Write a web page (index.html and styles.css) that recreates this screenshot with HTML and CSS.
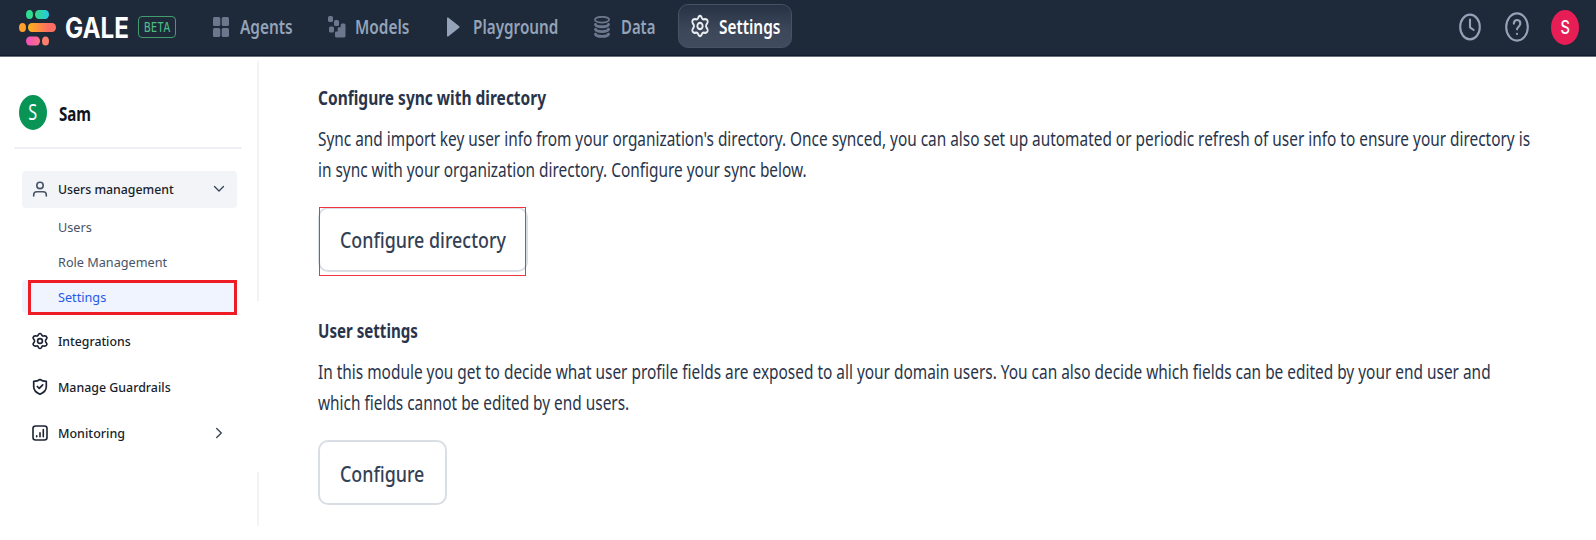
FILE: index.html
```html
<!DOCTYPE html>
<html lang="en">
<head>
<meta charset="utf-8">
<title>GALE Settings</title>
<link rel="stylesheet" href="styles.css">
</head>
<body>
<svg class="defs" width="0" height="0" aria-hidden="true">
  <symbol id="gear" viewBox="0 0 24 24" preserveAspectRatio="none">
    <path d="M9.6 4.3L10.2 3Q12 .9 13.8 3L14.4 4.3Q15 5.5 16.4 5.4L18 5.2Q20.6 5.1 21.2 7.2Q21.4 8.4 20.4 9.7L19.6 10.7Q18.8 12 19.6 13.3L20.4 14.3Q21.4 15.6 21.2 16.8Q20.6 18.9 18 18.8L16.4 18.6Q15 18.5 14.4 19.7L13.8 21Q12 23.1 10.2 21L9.6 19.7Q9 18.5 7.6 18.6L6 18.8Q3.4 18.9 2.8 16.8Q2.6 15.6 3.6 14.3L4.4 13.3Q5.2 12 4.4 10.7L3.6 9.7Q2.6 8.4 2.8 7.2Q3.4 5.1 6 5.2L7.6 5.4Q9 5.5 9.6 4.3Z"/>
    <circle cx="12" cy="12" r="3.2"/>
  </symbol>
</svg>
<header class="topbar">
  <div class="brand">
    <svg class="logo" width="38" height="36" viewBox="0 0 38 36">
      <defs>
        <linearGradient id="g1"><stop offset="0" stop-color="#34d982"/><stop offset="1" stop-color="#25c9e8"/></linearGradient>
        <linearGradient id="g2"><stop offset="0" stop-color="#ffb31a"/><stop offset=".7" stop-color="#ff6f61"/></linearGradient>
        <linearGradient id="g3"><stop offset="0" stop-color="#f04fc0"/><stop offset="1" stop-color="#fb7185"/></linearGradient>
      </defs>
      <ellipse cx="10.5" cy="4.5" rx="3.5" ry="4.5" fill="#30dc90"/>
      <rect x="16" y="0" width="14" height="9" rx="4" ry="4.5" fill="url(#g1)"/>
      <ellipse cx="3.5" cy="17.5" rx="3.5" ry="4.5" fill="#ffa12b"/>
      <rect x="9" y="13" width="28" height="9" rx="4" ry="4.5" fill="url(#g2)"/>
      <rect x="7" y="26.5" width="14" height="9" rx="4" ry="4.5" fill="url(#g3)"/>
      <ellipse cx="26.5" cy="31" rx="3.5" ry="4.5" fill="#ff7d6b"/>
    </svg>
    <div class="wordmark"><span class="narrow">GALE</span></div>
    <div class="beta"><span class="narrow">BETA</span></div>
  </div>
  <nav class="nav">
    <a class="nav-item agents">
      <svg width="16" height="20" viewBox="0 0 16 20" fill="#6b778c"><rect width="7.3" height="9" rx="1.6"/><rect x="8.7" width="7.3" height="9" rx="1.6"/><rect y="11" width="7.3" height="9" rx="1.6"/><rect x="8.7" y="11" width="7.3" height="9" rx="1.6"/></svg>
      <span class="narrow">Agents</span>
    </a>
    <a class="nav-item models">
      <svg width="18" height="22" viewBox="0 0 18 22" fill="#6b778c"><rect width="5" height="6" rx="1.5"/><rect x="6" y="4" width="5" height="6" rx="1.5"/><rect x="1" y="10.5" width="5" height="6" rx="1.5"/><path d="M17.5 9Q17.5 7.5 16 7.5H14Q12.7 7.5 12.7 9V11.3H10.7Q9.7 11.3 9.7 12.5V15.5H8Q7 15.5 7 16.8V20Q7 21.5 8.5 21.5H16Q17.5 21.5 17.5 20Z"/></svg>
      <span class="narrow">Models</span>
    </a>
    <a class="nav-item playground">
      <svg width="13" height="20" viewBox="0 0 13 20" fill="#94a3b8"><path d="M0 1.3Q0 0 1.2.6L12.2 9.2Q13 10 12.2 10.8L1.2 19.4Q0 20 0 18.7Z"/></svg>
      <span class="narrow">Playground</span>
    </a>
    <a class="nav-item data">
      <svg width="16" height="22" viewBox="0 0 16 22" fill="none" stroke="#6b778c"><ellipse cx="8" cy="3.7" rx="7.1" ry="2.9" stroke-width="1.8"/><path stroke-width="2.9" stroke-linecap="round" d="M1.5 8.5Q2 10.8 8 10.8T14.5 8.5M1.5 13.3Q2 15.6 8 15.6T14.5 13.3M1.5 18.1Q2 20.4 8 20.4T14.5 18.1"/></svg>
      <span class="narrow">Data</span>
    </a>
    <a class="nav-item settings">
      <svg width="20" height="24" fill="none" stroke="#e8ebf0" stroke-width="2.2"><use href="#gear"/></svg>
      <span class="narrow">Settings</span>
    </a>
  </nav>
  <div class="tools">
    <svg width="22" height="28" viewBox="0 0 22 28" fill="none" stroke="#94a3b8" stroke-width="2.1" stroke-linecap="round" stroke-linejoin="round"><ellipse cx="11" cy="14" rx="9.8" ry="12.4"/><path d="M11 6.5V14.3L14.7 17"/></svg>
    <svg width="24" height="30" viewBox="0 0 24 30" fill="none" stroke="#94a3b8" stroke-width="2.1" stroke-linecap="round"><ellipse cx="12" cy="15" rx="10.8" ry="13.6"/><path d="M8.8 11.7C9.2 6.5 15.5 7.2 15.3 11.8C15.1 14.6 12.2 14.8 12 17.3M12 21.7V22"/></svg>
    <div class="me"><span class="narrow">S</span></div>
  </div>
</header>
<div class="layout">
  <aside class="sidebar">
    <div class="account">
      <div class="account-avatar"><span class="narrow">S</span></div>
      <span class="account-name narrow">Sam</span>
    </div>
    <ul class="menu">
      <li class="item group">
        <svg width="16" height="16" viewBox="0 0 16 16" fill="none" stroke="#475467" stroke-width="1.6" stroke-linecap="round"><circle cx="8" cy="4.4" r="3.2"/><path d="M1.7 15V13.8Q1.7 10.7 4.8 10.7H11.2Q14.3 10.7 14.3 13.8V15"/></svg>
        <span class="narrow um">Users management</span>
        <svg class="chev" width="12" height="12" viewBox="0 0 12 12" fill="none" stroke="#344054" stroke-width="1.3" stroke-linecap="round" stroke-linejoin="round"><path d="M1.5 3.5L6 8L10.5 3.5"/></svg>
      </li>
      <li class="sub"><span class="narrow rm">Users</span></li>
      <li class="sub"><span class="narrow rm">Role Management</span></li>
      <li class="sub current"><span class="narrow rm">Settings</span></li>
      <li class="item">
        <svg width="18" height="18" fill="none" stroke="#1d2433" stroke-width="2.2"><use href="#gear"/></svg>
        <span class="narrow ig">Integrations</span>
      </li>
      <li class="item">
        <svg width="16" height="18" viewBox="0 0 16 18" fill="none" stroke="#1d2433" stroke-width="1.7" stroke-linecap="round" stroke-linejoin="round"><path d="M8 1.5Q10.5 3.2 14.3 3.4V8.8Q14.3 13.6 8 16.3Q1.7 13.6 1.7 8.8V3.4Q5.5 3.2 8 1.5ZM5.3 8.5L7.3 10.4L10.7 6.8"/></svg>
        <span class="narrow mg">Manage Guardrails</span>
      </li>
      <li class="item">
        <svg width="16" height="16" viewBox="0 0 16 16" fill="none" stroke="#1d2433" stroke-width="1.6" stroke-linecap="round"><rect x="1" y="1" width="14" height="14" rx="2.5"/><path d="M4.7 11.8V10.8M8 11.8V7.8M11.3 11.8V4.5"/></svg>
        <span class="narrow mo">Monitoring</span>
        <svg class="chev" width="12" height="12" viewBox="0 0 12 12" fill="none" stroke="#344054" stroke-width="1.3" stroke-linecap="round" stroke-linejoin="round"><path d="M3.7 1.5L8.3 6L3.7 10.5"/></svg>
      </li>
    </ul>
  </aside>
  <div class="rail"><i class="rail-top"></i><i class="rail-bottom"></i></div>
  <main class="content">
    <section>
      <h2><span class="narrow h-sync">Configure sync with directory</span></h2>
      <p><span class="narrow">Sync and import key user info from your organization's directory. Once synced, you can also set up automated or periodic refresh of user info to ensure your directory is</span><span class="narrow">in sync with your organization directory. Configure your sync below.</span></p>
      <button class="btn btn-directory"><span class="narrow">Configure directory</span></button>
    </section>
    <section>
      <h2><span class="narrow h-user">User settings</span></h2>
      <p><span class="narrow wide">In this module you get to decide what user profile fields are exposed to all your domain users. You can also decide which fields can be edited by your end user and</span><span class="narrow">which fields cannot be edited by end users.</span></p>
      <button class="btn btn-configure"><span class="narrow">Configure</span></button>
    </section>
  </main>
</div>
</body>
</html>
```
FILE: styles.css
```css
* { box-sizing: border-box; }
body { margin: 0; height: 540px; overflow: hidden; background: #fff; color: #29344a; font-family: "Noto Sans", "Open Sans", sans-serif; }
svg { flex: none; display: block; }
.defs { position: absolute; }
.narrow { display: block; white-space: nowrap; transform: scaleX(.77); transform-origin: 0 50%; }

.topbar { display: flex; height: 57px; background: #1e293a; border-bottom: 1px solid #66707e; box-shadow: inset 0 -1px #0f1b2e; }
.brand { display: flex; width: 213px; padding-left: 19px; }
.logo { margin-top: 10px; }
.wordmark { width: 63px; margin-left: 8px; font: 700 29px/55px Inter, sans-serif; color: #fff; }
.wordmark .narrow { transform: scaleX(.835); }
.beta { width: 38px; height: 22px; margin: 16px 0 0 10px; padding-left: 5px; border: 1.5px solid #3f9d6e; border-radius: 4px; font: 500 13px/21px Inter, sans-serif; color: #4cba84; }
.beta .narrow { transform: scaleX(.78); letter-spacing: .3px; }

.nav { display: flex; flex: 1; align-items: flex-start; color: #94a3b8; font-size: 20px; font-weight: 600; line-height: 52px; }
.nav-item { display: flex; height: 53px; align-items: center; flex: none; }
.agents { width: 115px; gap: 10.5px; }
.models { width: 119px; gap: 9px; }
.playground { width: 147px; gap: 12.5px; }
.data { width: 84px; gap: 11px; }
.playground .narrow { transform: scaleX(.764); }
.data .narrow { transform: scaleX(.745); }
.settings { width: 114px; height: 44px; margin-top: 4px; padding-left: 11px; gap: 9px; border: 1px solid #465265; border-radius: 10px; background: linear-gradient(#273244, #3c475a 60%, #404b5d); color: #fff; line-height: 43px; }

.tools { display: flex; flex: none; align-items: center; height: 53px; padding-right: 17px; }
.tools svg + svg { margin-left: 24px; }
.me, .account-avatar { display: flex; align-items: center; justify-content: center; width: 28px; height: 35px; border-radius: 50%; color: #fff; }
.me { margin: 2px 0 0 22.5px; background: #e71d56; font: 500 19px/35px Inter, sans-serif; }
.me .narrow, .account-avatar .narrow { transform-origin: 50% 50%; }

.layout { display: flex; height: 483px; }
.sidebar { width: 257px; }
.account { display: flex; align-items: center; height: 92px; margin-left: 14px; width: 228px; padding: 20px 0 0 5px; border-bottom: 2px solid #eef0f4; }
.account-avatar { background: #079455; font-size: 21px; line-height: 37px; }
.account-name { margin: 2px 0 0 11.5px; font-size: 20px; font-weight: 700; color: #101320; transform: scaleX(.755); }
.menu { margin: 22px 0 0 22px; padding: 0; width: 215px; list-style: none; font-size: 13px; }
.item { display: grid; grid-template-columns: 18px 1fr 12px; column-gap: 8.5px; align-items: center; height: 46.2px; padding: 0 12px 0 9px; font-weight: 500; color: #181d2b; }
.item > svg:first-child { justify-self: center; }
.group { height: 37px; margin-bottom: 2px; padding-bottom: 1px; border-radius: 4px; background: #f2f4f7; }
.sub { height: 35px; padding-left: 35.5px; line-height: 35px; color: #475467; }
.current { position: relative; height: 33px; margin: 0 0 5px; line-height: 34px; border-radius: 4px; background: #eff4ff; color: #2459eb; }
.current::after { content: ""; position: absolute; inset: 0 0 -2px 6px; border: 3px solid #ee1c25; }
.um { transform: scaleX(.945); }
.rm { transform: scaleX(.975); }
.ig { transform: scaleX(.945); }
.mg { transform: scaleX(.953); }
.mo { transform: scaleX(.962); }

.rail { display: flex; flex-direction: column; justify-content: space-between; width: 2px; height: 469px; padding-top: 4px; }
.rail i { display: block; background: #f2f3f5; }
.rail-top { height: 240px; }
.rail-bottom { height: 54px; }

.content { flex: 1; padding: 26px 0 0 59px; min-width: 0; }
h2 { margin: 0 0 10px; font-size: 20px; line-height: 30px; font-weight: 700; }
.h-sync { transform: scaleX(.775); }
.h-user { transform: scaleX(.755); }
p { margin: 0 0 22px; font-size: 20px; line-height: 31px; }
p .narrow { transform: scaleX(.7695); }
p .wide { transform: scaleX(.7705); }
section + section { margin-top: 44px; }
.btn { display: block; position: relative; height: 65px; padding: 0 0 0 20px; border: 2px solid #d9dee5; border-radius: 10px; background: #fff; color: #344054; font: 500 22px/61px "Noto Sans", sans-serif; text-align: left; }
.btn .narrow { transform: scaleX(.812); }
.btn-directory { width: 210px; }
.btn-directory::after { content: ""; position: absolute; inset: -2px 0 -6px -1px; border: 1.5px solid #ef3340; }
.btn-configure { width: 129px; line-height: 63px; }
```
